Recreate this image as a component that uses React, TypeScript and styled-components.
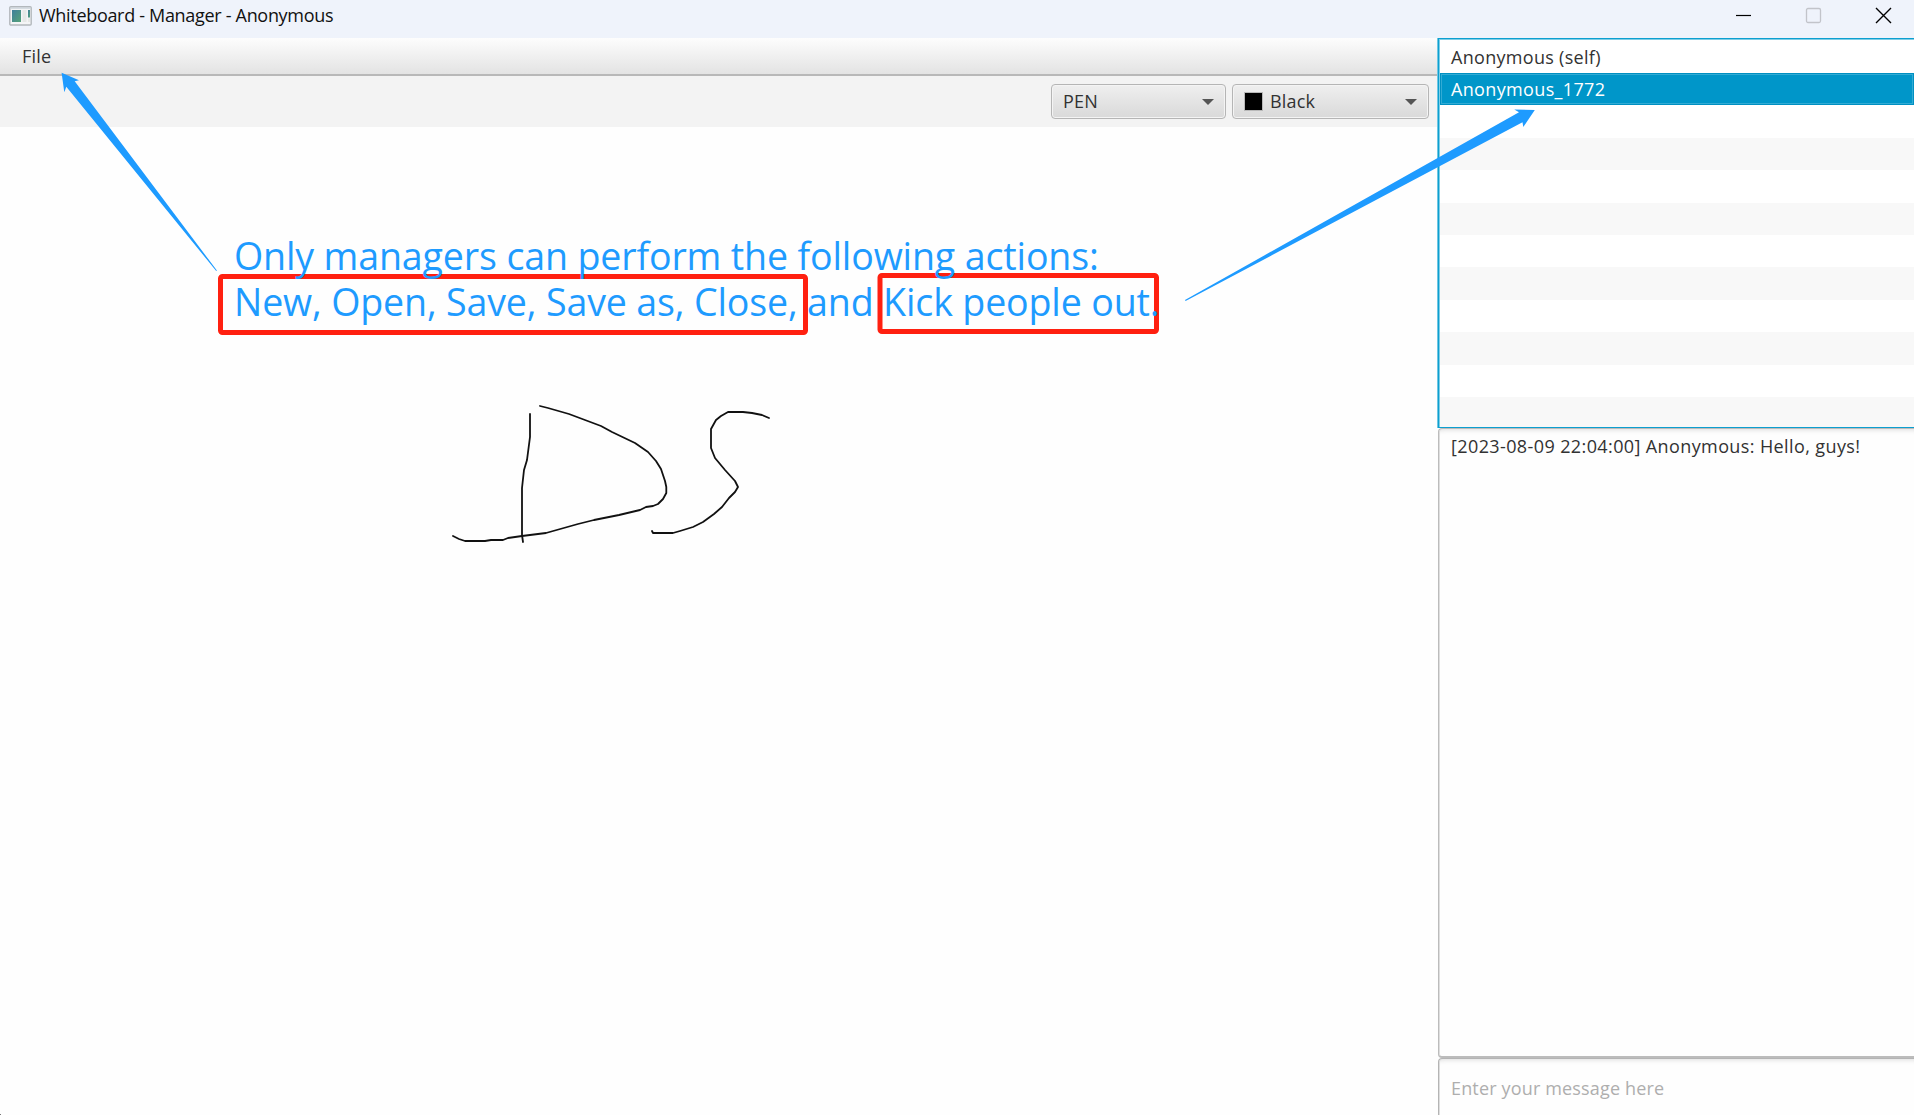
import React from "react";
import styled, { createGlobalStyle } from "styled-components";

const Global = createGlobalStyle`
  *, *::before, *::after { box-sizing: border-box; }
  html, body { margin: 0; padding: 0; background: #fff; overflow: hidden; }
  body { font-family: "Open Sans", "Noto Sans", sans-serif; font-size: 18px; color: #323232; }
`;

const Window = styled.div`
  position: relative;
  display: flex;
  flex-direction: column;
  width: 1914px;
  height: 1115px;
  background: #fefefe;
  overflow: hidden;
`;

const TitleBar = styled.header`
  display: flex;
  align-items: center;
  flex: 0 0 38px;
  padding: 0 22px 7px 9px;
  background: #eff3fb;
`;

const Label = styled.span<{ $spacing?: number }>`
  white-space: pre;
  letter-spacing: ${(p) => p.$spacing ?? 0}px;
`;

const Title = styled(Label)`
  flex: 1;
  margin-left: 7px;
  padding-bottom: 1px;
  color: #111;
  line-height: 29px;
`;

const WindowControls = styled.div`
  display: flex;
  align-items: center;
  gap: 53px;
  height: 31px;
`;

const Body = styled.div`
  display: flex;
  flex: 1;
  min-height: 0;
`;

const Board = styled.main`
  display: flex;
  flex-direction: column;
  flex: 0 0 1438px;
`;

const MenuBar = styled.nav`
  display: flex;
  align-items: center;
  flex: 0 0 38px;
  padding: 0 0 1px 22px;
  background: linear-gradient(#fdfdfd, #e3e3e3);
  border-bottom: 2px solid #b8b8b8;
`;

const Toolbar = styled.div`
  display: flex;
  justify-content: flex-end;
  align-items: flex-start;
  gap: 6px;
  flex: 0 0 51px;
  padding: 8px 9px 0 0;
  background: #f3f3f3;
`;

const Combo = styled.div<{ $width: number }>`
  display: flex;
  align-items: center;
  width: ${(p) => p.$width}px;
  height: 35px;
  padding: 0 11px;
  border: 1.5px solid #b5b5b5;
  border-radius: 4px;
  background: linear-gradient(#efefef, #d9d9d9);
  box-shadow: inset 0 0 0 1px #f4f4f4;
`;

const ComboText = styled(Label)`
  flex: 1;
  padding-bottom: 2px;
`;

const Swatch = styled.i`
  width: 19px;
  height: 19px;
  margin: 0 7px 1px 0;
  background: #000;
  border: 1px solid #b9b9b9;
`;

const Caret = styled.i`
  border: 6px solid transparent;
  border-top-color: #555;
  border-bottom-width: 0;
`;

const Canvas = styled.div`
  flex: 1;
`;

const Side = styled.aside`
  display: flex;
  flex-direction: column;
  flex: 1;
  min-width: 0;
`;

const UserList = styled.div`
  flex: 0 0 390px;
  padding: 1px 0 0 1px;
  border: solid #0c9fd0;
  border-width: 1px 0 1px 1px;
  background: linear-gradient(#7fcde6, #7fcde6) left / 1px 100% no-repeat,
    linear-gradient(#7fcde6, #7fcde6) top / 100% 1px no-repeat, #fff;
  box-shadow: -1px 0 0 #6fc7e3;
  overflow: hidden;
`;

const UserRow = styled.div<{ $tone: "plain" | "stripe" | "selected" }>`
  display: flex;
  align-items: center;
  height: 32.4px;
  padding-left: 11px;
  color: ${(p) => (p.$tone === "selected" ? "#fff" : "#323232")};
  background: ${(p) => (p.$tone === "selected" ? "#0096c9" : p.$tone === "stripe" ? "#f8f8f8" : "#fff")};
  box-shadow: ${(p) => (p.$tone === "selected" ? "inset 0 0 0 1px #0090c2, inset 0 0 0 2px #32abd4" : "none")};

  &:first-child {
    height: 33px;
  }
`;

const ChatLog = styled.div`
  flex: 0 0 630px;
  padding: 3px 0 0 12px;
  line-height: 28px;
  border: solid #bcbcbc;
  border-width: 1px 0 2px 1.5px;
  border-radius: 4px 0 0 4px;
  box-shadow: inset 0 6px 5px -5px #ddd, inset 1px 0 0 #dedede;
`;

const MessageInput = styled.div`
  flex: 1;
  padding: 15px 0 0 12px;
  color: #aeaeae;
  line-height: 28px;
  border: solid #b4b4b4;
  border-width: 1px 0 0 1.5px;
  border-radius: 4px 0 0 0;
  box-shadow: inset 0 6px 5px -5px #ddd, inset 1px 0 0 #dedede;
`;

const Overlay = styled.svg`
  position: absolute;
  inset: 0;
  pointer-events: none;
`;

const Note = styled.div`
  position: absolute;
  left: 234px;
  top: 233px;
  font-size: 37.6px;
  line-height: 46px;
  color: #1e9bff;
`;

const NoteLine = styled(Label)`
  display: block;
`;

const users: { name: string; spacing: number }[] = [
  { name: "Anonymous (self)", spacing: 0.3 },
  { name: "Anonymous_1772", spacing: 0.35 },
];

const AppIcon = () => (
  <svg width="23" height="20" viewBox="0 0 23 20">
    <defs>
      <linearGradient id="screen" x1="0" y1="0" x2="1" y2="1">
        <stop offset="0" stopColor="#3f7f9c" />
        <stop offset="1" stopColor="#56a378" />
      </linearGradient>
    </defs>
    <rect x="0.8" y="0.8" width="21.4" height="18.2" rx="1" fill="#f4f5f6" stroke="#b3b8bc" strokeWidth="1.4" />
    <path d="M1.5 2h20" stroke="#ccd3da" strokeWidth="1.5" />
    <rect x="3" y="4" width="9" height="12" fill="url(#screen)" />
    <rect x="13.5" y="4" width="4" height="12" fill="#e6e8e6" />
    <rect x="19" y="4" width="2" height="7.5" fill="url(#screen)" />
    <rect x="19" y="12.5" width="2" height="3.5" fill="#e6e8e6" />
  </svg>
);

export default function App() {
  return (
    <Window>
      <Global />
      <TitleBar>
        <AppIcon />
        <Title $spacing={-0.31}>Whiteboard - Manager - Anonymous</Title>
        <WindowControls>
          <svg width="17" height="17"><path d="M1 8.5h15" stroke="#000" strokeWidth="1.2" /></svg>
          <svg width="17" height="17"><rect x="1.5" y="1.5" width="14" height="14" rx="1.5" fill="none" stroke="#c2c4ca" strokeWidth="1.3" /></svg>
          <svg width="17" height="17"><path d="M1 1l15 15M16 1L1 16" stroke="#000" strokeWidth="1.4" /></svg>
        </WindowControls>
      </TitleBar>
      <Body>
        <Board>
          <MenuBar><Label $spacing={0.2}>File</Label></MenuBar>
          <Toolbar>
            <Combo $width={175}><ComboText $spacing={0.2}>PEN</ComboText><Caret /></Combo>
            <Combo $width={197}><Swatch /><ComboText $spacing={0.2}>Black</ComboText><Caret /></Combo>
          </Toolbar>
          <Canvas />
        </Board>
        <Side>
          <UserList>
            {Array.from({ length: 12 }, (_, i) => (
              <UserRow key={i} $tone={i === 1 ? "selected" : i % 2 ? "stripe" : "plain"}>
                {users[i] && <Label $spacing={users[i].spacing}>{users[i].name}</Label>}
              </UserRow>
            ))}
          </UserList>
          <ChatLog><Label $spacing={0.39}>[2023-08-09 22:04:00] Anonymous: Hello, guys!</Label></ChatLog>
          <MessageInput><Label $spacing={0.16}>Enter your message here</Label></MessageInput>
        </Side>
      </Body>
      <Overlay width="1914" height="1115">
        <g fill="none" stroke="#111" strokeWidth="1.8" strokeLinecap="round" strokeLinejoin="round">
          <path d="M530 414V437L527 460L524 470L522 488V535L523 542" />
          <path d="M540 406L548 408L569 414L585 420L601 426L612 432L635 443L648 452L656 461L661 469L665 481L666.3 487V493L663 499L658 504L653 506L646 507L640 510L619 515L594 520L578 524L546 533L522 536L508 538L503 540H491L485 541H465L459 539L453 536" />
          <path d="M769 418L762 415L752 413L743 412H728L721 416L716 420L711 429V448L715 458L725 470L735 481L738 487L735 492L729 498L722 507L714 514L703 522L693 527L680 531L673 533H653L652 531" />
        </g>
        <g fill="#1e9bff">
          <path d="M61.6 72.7L79 80.3L74.7 81.3L216.9 270.5L216.2 271L66.3 86.7L64.3 92.3Z" />
          <path d="M1534.8 110L1514.3 109.5L1519 112.3L1185 300L1185.6 301L1522.5 122.2L1523.3 127Z" />
        </g>
        <g fill="none" stroke="#ff2010" strokeWidth="5">
          <rect x="220.5" y="276.5" width="585" height="56" rx="2" />
          <rect x="880" y="275.5" width="276.5" height="56" rx="2" />
        </g>
        <rect x="0" y="1114" width="1" height="1" fill="#777" />
      </Overlay>
      <Note>
        <NoteLine $spacing={-0.15}>Only managers can perform the following actions:</NoteLine>
        <NoteLine $spacing={-0.16}>New, Open, Save, Save as, Close, and Kick people out.</NoteLine>
      </Note>
    </Window>
  );
}
